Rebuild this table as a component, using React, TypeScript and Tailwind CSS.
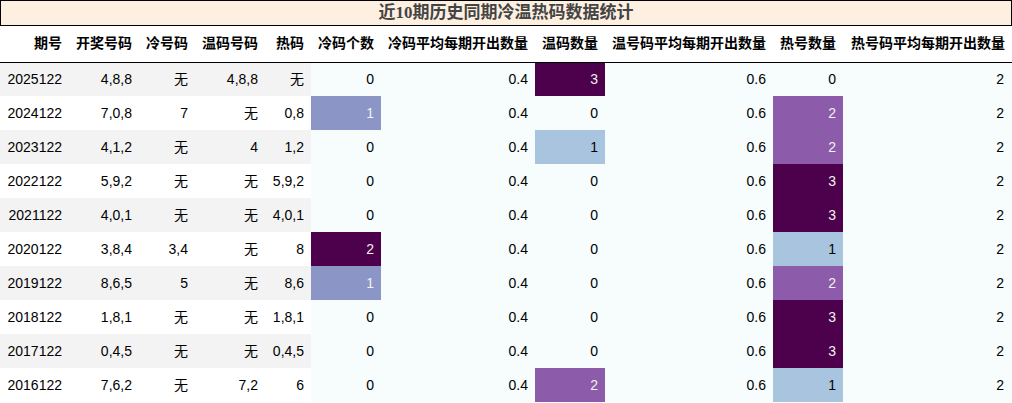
import React from "react";

const widths = [69, 70, 56, 70, 46, 70, 154, 70, 168, 70, 169];
const headers = ["期号", "开奖号码", "冷号码", "温码号码", "热码", "冷码个数", "冷码平均每期开出数量", "温码数量", "温号码平均每期开出数量", "热号数量", "热号码平均每期开出数量"];

type Row = [string, string, string, string, string, number, string, number, string, number, string];
const rows: Row[] = [
  ["2025122", "4,8,8", "无", "4,8,8", "无", 0, "0.4", 3, "0.6", 0, "2"],
  ["2024122", "7,0,8", "7", "无", "0,8", 1, "0.4", 0, "0.6", 2, "2"],
  ["2023122", "4,1,2", "无", "4", "1,2", 0, "0.4", 1, "0.6", 2, "2"],
  ["2022122", "5,9,2", "无", "无", "5,9,2", 0, "0.4", 0, "0.6", 3, "2"],
  ["2021122", "4,0,1", "无", "无", "4,0,1", 0, "0.4", 0, "0.6", 3, "2"],
  ["2020122", "3,8,4", "3,4", "无", "8", 2, "0.4", 0, "0.6", 1, "2"],
  ["2019122", "8,6,5", "5", "无", "8,6", 1, "0.4", 0, "0.6", 2, "2"],
  ["2018122", "1,8,1", "无", "无", "1,8,1", 0, "0.4", 0, "0.6", 3, "2"],
  ["2017122", "0,4,5", "无", "无", "0,4,5", 0, "0.4", 0, "0.6", 3, "2"],
  ["2016122", "7,6,2", "无", "7,2", "6", 0, "0.4", 2, "0.6", 1, "2"],
];

function coldCls(v: number) {
  if (v === 2) return "bg-[#4d004b] text-[#f1f1f1]";
  if (v === 1) return "bg-[#8c96c6] text-[#f1f1f1]";
  return "bg-[#f7fcfd] text-black";
}
function tripleCls(v: number) {
  if (v === 3) return "bg-[#4d004b] text-[#f1f1f1]";
  if (v === 2) return "bg-[#8c5caa] text-[#f1f1f1]";
  if (v === 1) return "bg-[#a8c4de] text-black";
  return "bg-[#f7fcfd] text-black";
}

export default function App() {
  return (
    <div className="w-[1012px] bg-white" style={{ fontFamily: '"Liberation Sans", "Noto Sans CJK SC", sans-serif' }}>
      <div
        className="h-[26px] border border-black bg-[#fef0e1] flex items-center justify-center font-bold text-[17px] text-[#444]"
        style={{ fontFamily: '"Liberation Serif", "Noto Sans CJK SC", serif' }}
      >
        近10期历史同期冷温热码数据统计
      </div>
      <table className="table-fixed border-collapse w-[1012px] text-[14px] text-black">
        <colgroup>
          {widths.map((w, i) => (
            <col key={i} style={{ width: w }} />
          ))}
        </colgroup>
        <thead>
          <tr className="h-[36px] border-b border-black">
            {headers.map((h, i) => (
              <th key={i} className="px-[7px] text-right font-bold whitespace-nowrap p-0">
                {h}
              </th>
            ))}
          </tr>
        </thead>
        <tbody>
          {rows.map((r, ri) => {
            const base = ri % 2 === 0 ? "bg-[#f3f3f3]" : "bg-white";
            return (
              <tr key={ri} className="h-[34px]">
                {r.slice(0, 5).map((c, ci) => (
                  <td key={ci} className={`${base} px-[7px] text-right whitespace-nowrap`}>
                    {c}
                  </td>
                ))}
                <td className={`${coldCls(r[5])} px-[7px] text-right`}>{r[5]}</td>
                <td className="bg-[#f7fcfd] px-[7px] text-right">{r[6]}</td>
                <td className={`${tripleCls(r[7])} px-[7px] text-right`}>{r[7]}</td>
                <td className="bg-[#f7fcfd] px-[7px] text-right">{r[8]}</td>
                <td className={`${tripleCls(r[9])} px-[7px] text-right`}>{r[9]}</td>
                <td className="bg-[#f7fcfd] pl-[7px] pr-[8px] text-right">{r[10]}</td>
              </tr>
            );
          })}
        </tbody>
      </table>
    </div>
  );
}
